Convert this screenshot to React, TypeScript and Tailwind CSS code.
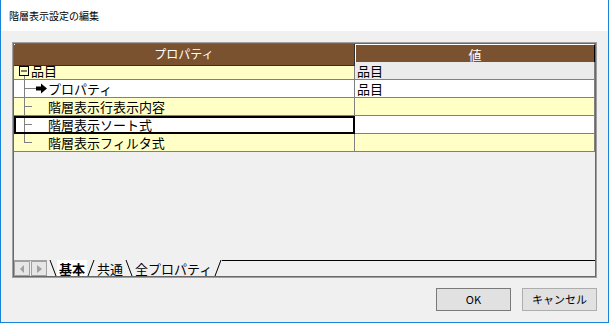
const font = { fontFamily: '"Noto Sans CJK JP", "Noto Sans", sans-serif' };

type Row = {
  label: string;
  value: string;
  leftBg: string;
  rightBg: string;
  kind: 'root' | 'arrow' | 'child' | 'last';
  selected?: boolean;
};

const rows: Row[] = [
  { label: '品目', value: '品目', leftBg: 'bg-[#ffffc6]', rightBg: 'bg-[#ebebeb]', kind: 'root' },
  { label: 'プロパティ', value: '品目', leftBg: 'bg-white', rightBg: 'bg-white', kind: 'arrow' },
  { label: '階層表示行表示内容', value: '', leftBg: 'bg-[#ffffc6]', rightBg: 'bg-[#ffffc6]', kind: 'child' },
  { label: '階層表示ソート式', value: '', leftBg: 'bg-white', rightBg: 'bg-white', kind: 'child', selected: true },
  { label: '階層表示フィルタ式', value: '', leftBg: 'bg-[#ffffc6]', rightBg: 'bg-[#ffffc6]', kind: 'last' },
];

const TreeGutter = ({ kind }: { kind: Row['kind'] }) => {
  if (kind === 'root') {
    return (
      <svg width="17" height="17" className="shrink-0">
        <rect x="5.5" y="4.5" width="9" height="9" fill="none" stroke="#000" />
        <line x1="7" y1="9" x2="13" y2="9" stroke="#000" />
        <line x1="10.5" y1="14" x2="10.5" y2="17" stroke="#808080" />
      </svg>
    );
  }
  return (
    <svg width="34" height="17" className="shrink-0">
      <line x1="10.5" y1="-1" x2="10.5" y2={kind === 'last' ? 9 : 17} stroke="#808080" />
      <line x1="10" y1="8.5" x2={kind === 'arrow' ? 22 : 18} y2="8.5" stroke="#808080" />
      {kind === 'arrow' && <path d="M22 6.5 H27 V3.5 L33 8.5 L27 13.5 V10.5 H22 Z" fill="#000" />}
    </svg>
  );
};

const Tab = ({ label, active }: { label: string; active?: boolean }) => (
  <div
    className={`h-[16px] px-[2px] flex items-center text-[13px] leading-none ${
      active ? 'bg-white font-bold text-black' : 'text-black'
    }`}
  >
    {label}
  </div>
);

const Slash = ({ dir }: { dir: 'l' | 'r' }) => (
  <svg width="8" height="16" className="shrink-0">
    {dir === 'l' ? (
      <line x1="1" y1="0" x2="7" y2="16" stroke="#000" />
    ) : (
      <line x1="7" y1="0" x2="1" y2="16" stroke="#000" />
    )}
  </svg>
);

export default function App() {
  return (
    <div className="w-[609px] h-[323px] border-x border-b border-[#1883d7] bg-[#f0f0f0] flex flex-col" style={font}>
      <div className="h-[31px] bg-white flex items-center pl-[8px] text-[10px] text-black shrink-0">
        階層表示設定の編集
      </div>

      <div className="flex-1 flex flex-col px-[11px] pt-[11px]">
        <div className="h-[236px] border border-[#a0a0a0] flex flex-col">
          <div className="flex-1 border border-[#696969] flex flex-col bg-[#f0f0f0]">
            <div className="grid grid-cols-[341px_1fr] h-[18px] text-white text-[12px]">
              <div className="relative bg-[#7b5230] border-r border-b border-[#303030] flex items-center justify-center">
                <span className="absolute left-0 top-0 w-px h-px bg-white" />
                プロパティ
              </div>
              <div className="bg-[#7b5230] border-t border-l border-white border-r border-b border-r-black border-b-black flex items-center justify-center text-[13px]">
                値
              </div>
            </div>

            {rows.map((r) => (
              <div key={r.label} className="grid grid-cols-[341px_1fr] h-[18px] text-[13px] text-black">
                <div
                  className={`flex items-center border-r border-b border-[#808080] ${r.leftBg} ${
                    r.selected ? 'outline-2 outline-black -outline-offset-2' : ''
                  }`}
                >
                  <TreeGutter kind={r.kind} />
                  <span className="leading-none">{r.label}</span>
                </div>
                <div className={`flex items-center pl-[2px] border-r border-b border-[#808080] ${r.rightBg}`}>
                  <span className="leading-none">{r.value}</span>
                </div>
              </div>
            ))}

            <div className="flex-1" />

            <div className="h-[16px] flex items-start">
              <div className="flex gap-px border-t border-[#a0a0a0]">
                <div className="w-[16px] h-[15px] bg-[#e6e6e6] border border-[#a0a0a0] flex items-center justify-center">
                  <svg width="5" height="8"><path d="M4 0 L0 4 L4 8 Z" fill="#a0a0a0" /></svg>
                </div>
                <div className="w-[16px] h-[15px] bg-[#e6e6e6] border border-[#a0a0a0] flex items-center justify-center">
                  <svg width="5" height="8"><path d="M0 0 L5 4 L0 8 Z" fill="#a0a0a0" /></svg>
                </div>
              </div>
              <div className="flex items-start ml-[2px]">
                <Slash dir="l" />
                <Tab label="基本" active />
                <Slash dir="r" />
                <Tab label="共通" />
                <Slash dir="l" />
                <Tab label="全プロパティ" />
                <Slash dir="r" />
              </div>
              <div className="flex-1 border-t border-black" />
            </div>
          </div>
        </div>

        <div className="flex justify-end gap-[11px] mt-[10px]">
          <button className="w-[75px] h-[23px] bg-[#e1e1e1] border border-[#7a7a7a] text-[11px] text-black">
            OK
          </button>
          <button className="w-[75px] h-[23px] bg-[#e1e1e1] border border-[#adadad] text-[11px] text-black">
            キャンセル
          </button>
        </div>
      </div>
    </div>
  );
}
